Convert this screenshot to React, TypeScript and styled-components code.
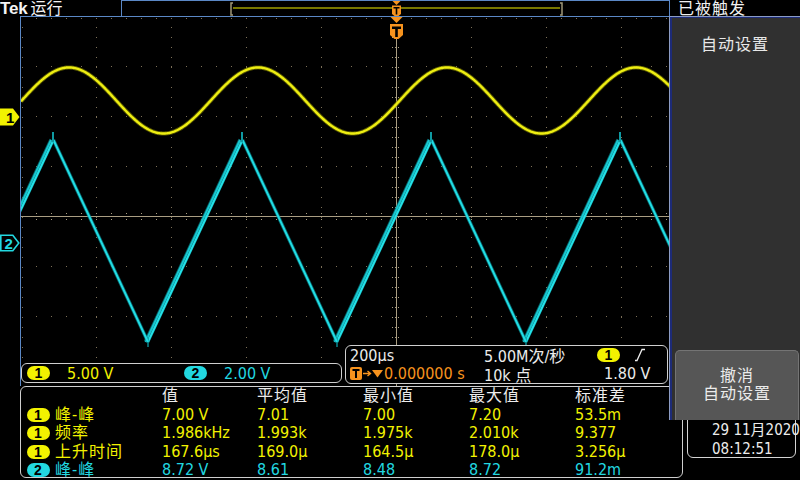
import React from 'react';
import styled, { createGlobalStyle } from 'styled-components';

const YELLOW = '#f2f200';
const CYAN = '#22d8e0';
const ORANGE = '#f7931e';
const FRAME = '#5b88c6';
const GRID = '#7d7058';
const AXIS = '#a99d82';

type Ch = 1 | 2;
const chColor = (c: Ch) => (c === 1 ? YELLOW : CYAN);

const GlobalStyle = createGlobalStyle`
  html, body {
    margin: 0;
    padding: 0;
    background: #000;
  }
  body {
    font-family: "Liberation Sans Narrow", "DejaVu Sans Condensed", "Liberation Sans", "Noto Sans CJK SC", sans-serif;
  }
`;

const Screen = styled.div`
  position: relative;
  width: 800px;
  height: 480px;
  overflow: hidden;
  background: #000;
  color: #e6e6e6;
  display: flex;
  flex-direction: column;
  font-size: 16px;
`;

/* ---------- top bar ---------- */

const TopBar = styled.div`
  display: flex;
  height: 16px;
  flex: none;
  padding-top: 1px;
  box-sizing: border-box;
`;

const Brand = styled.div`
  width: 121px;
  display: flex;
  align-items: center;
  gap: 3px;
  color: #f4f4f4;
  font-size: 16px;
  line-height: 15px;
  margin-top: -1px;
`;

const Logo = styled.span`
  font-family: "Liberation Sans", sans-serif;
  font-weight: bold;
  font-size: 17px;
  letter-spacing: -0.2px;
`;

const RecordBox = styled.div`
  width: 549px;
  height: 16px;
  margin-top: -1px;
  box-sizing: border-box;
  border: 1px solid ${FRAME};
  border-bottom: none;
`;

const TriggerState = styled.div`
  padding-left: 8px;
  font-size: 16px;
  line-height: 15px;
  letter-spacing: 1px;
  color: #f0f0f0;
  white-space: nowrap;
`;

/* ---------- waveform area ---------- */

const Body = styled.div`
  display: flex;
  height: 370px;
  flex: none;
`;

const MarkerColumn = styled.div`
  position: relative;
  width: 20px;
  flex: none;
`;

const ChMarker = styled.svg`
  position: absolute;
  left: 0;
`;

const PlotArea = styled.div`
  position: relative;
  flex: 1;
`;

const ReadoutRow = styled.div`
  position: absolute;
  left: 1px;
  bottom: 2px;
  display: flex;
  align-items: flex-end;
  gap: 3px;
`;

const ReadoutBox = styled.div`
  box-sizing: border-box;
  border: 1px solid #cfcfcf;
  border-radius: 6px;
  background: #000;
`;

const ScaleBox = styled(ReadoutBox)`
  width: 321px;
  height: 20px;
  margin-bottom: 1px;
  display: flex;
  align-items: center;
  padding-left: 5px;
`;

const ScaleItem = styled.div<{ $ch: Ch }>`
  width: 160px;
  display: flex;
  align-items: center;
  gap: 17px;
  color: ${p => chColor(p.$ch)};
`;

const TimeBox = styled(ReadoutBox)`
  width: 323px;
  height: 39px;
  padding: 0 0 0 4px;
  display: grid;
  grid-template-columns: 134px 113px 1fr;
  grid-auto-rows: 18.5px;
  align-content: center;
`;

const TimeCell = styled.div<{ $color?: string; $right?: boolean }>`
  display: flex;
  align-items: center;
  gap: 4px;
  white-space: nowrap;
  color: ${p => p.$color ?? '#ececec'};
  ${p => (p.$right ? 'padding-left: 7px;' : '')}
`;

const Pill = styled.span<{ $ch: Ch }>`
  display: inline-flex;
  align-items: center;
  justify-content: center;
  flex: none;
  width: 23px;
  height: 14px;
  border-radius: 7px;
  background: ${p => chColor(p.$ch)};
  color: #000;
  font-family: "Liberation Sans", sans-serif;
  font-weight: bold;
  font-size: 14px;
  line-height: 1;
`;

/* ---------- measurements ---------- */

const Bottom = styled.div`
  display: flex;
  flex: 1;
`;

const MeasTable = styled.div`
  margin-left: 20px;
  width: 663px;
  height: 92px;
  box-sizing: border-box;
  border: 1px solid #cfcfcf;
  border-radius: 6px;
  display: grid;
  grid-template-columns: 141px 95px 106px 106px 106px 1fr;
  grid-auto-rows: 18.5px;
  align-content: start;
  line-height: 18px;
`;

const Cell = styled.div<{ $color?: string }>`
  display: flex;
  align-items: center;
  white-space: nowrap;
  color: ${p => p.$color ?? '#ececec'};
`;

const LabelCell = styled(Cell)`
  padding-left: 6px;
  gap: 5px;
  letter-spacing: 1px;
`;

const HeadCell = styled(Cell)`
  letter-spacing: 1px;
`;

const DateBox = styled.div`
  margin: 24px 0 0 4px;
  width: 109px;
  height: 48px;
  box-sizing: border-box;
  border: 1px solid #d4d4d4;
  border-radius: 6px;
  padding: 10px 0 0 24px;
  font-size: 15px;
  line-height: 18.5px;
  color: #ececec;
  white-space: nowrap;
`;

/* ---------- side menu ---------- */

const SideMenu = styled.aside`
  position: absolute;
  top: 16px;
  right: 0;
  width: 131px;
  height: 404px;
  box-sizing: border-box;
  background: #303030;
  border-left: 1px solid #8c9cc4;
  border-top: 1px solid #8c9cc4;
  box-shadow: inset 2px 0 0 #1d2b78, inset 0 1px 0 #1d2b78;
  display: flex;
  flex-direction: column;
`;

const MenuTitle = styled.div`
  padding-top: 14px;
  text-align: center;
  font-size: 16px;
  letter-spacing: 1px;
  color: #e8e8e8;
`;

const MenuButton = styled.button`
  margin: auto 0 0 5px;
  width: 124px;
  height: 70px;
  box-sizing: border-box;
  background: #565656;
  border: 1px solid #747474;
  border-bottom: none;
  border-radius: 5px 5px 0 0;
  color: #ececec;
  font-family: inherit;
  font-size: 16px;
  letter-spacing: 1px;
  line-height: 18px;
  padding: 0 0 2px;
`;

/* ---------- drawing helpers ---------- */

const range = (a: number, b: number, step: number) => {
  const out: number[] = [];
  for (let v = a; v <= b + 0.001; v += step) out.push(v);
  return out;
};

const sinePath = () => {
  const pts = range(21, 771, 1).map(x => {
    const y = 100.5 - 33 * Math.cos((2 * Math.PI * (x - 447)) / 189);
    return `${x},${y.toFixed(2)}`;
  });
  return 'M' + pts.join(' L');
};

const PERIOD = 189;
const troughs = range(-41, 800, PERIOD);

const Graticule = () => {
  const vx = range(96.5, 696.5, 75).filter(x => x !== 396.5);
  const hy = range(66.5, 366.5, 50).filter(y => y !== 216.5);
  return (
    <g>
      {vx.map(x => (
        <line key={`v${x}`} x1={x} y1={27} x2={x} y2={417} stroke={GRID} strokeDasharray="1 9" />
      ))}
      {hy.map(y => (
        <line key={`h${y}`} x1={36} y1={y} x2={771} y2={y} stroke={GRID} strokeDasharray="1 14" />
      ))}
      <line x1={36} y1={18.5} x2={771} y2={18.5} stroke={GRID} strokeDasharray="1 14" />
      <line x1={22.5} y1={27} x2={22.5} y2={417} stroke={GRID} strokeDasharray="1 9" />
      <line x1={21} y1={216.5} x2={771} y2={216.5} stroke={AXIS} />
      <line x1={396.5} y1={39} x2={396.5} y2={417} stroke={AXIS} />
      {range(36, 771, 15).map(x => (
        <line key={`tx${x}`} x1={x + 0.5} y1={213} x2={x + 0.5} y2={221} stroke={AXIS} strokeDasharray="1 2" />
      ))}
      {range(27, 417, 10).map(y => (
        <line key={`ty${y}`} x1={392} y1={y + 0.5} x2={401} y2={y + 0.5} stroke={AXIS} strokeDasharray="1 2" />
      ))}
    </g>
  );
};

const Waves = () => {
  const sine = sinePath();
  const rising = troughs.map(t => `M${t},342 L${t + 94.5},140`).join(' ');
  const falling = troughs.map(t => `M${t + 94.5},140 L${t + PERIOD},342`).join(' ');
  return (
    <g clipPath="url(#grat)">
      <path d={sine} fill="none" stroke="#7a7a00" strokeWidth={4.2} opacity={0.7} />
      <path d={sine} fill="none" stroke="#eeee12" strokeWidth={2.4} />
      <path d={rising} fill="none" stroke="#0a8890" strokeWidth={5.5} transform="translate(-1.5,0)" opacity={0.7} />
      <path d={rising} fill="none" stroke="#17c6cf" strokeWidth={2} transform="translate(-2.5,0)" />
      <path d={rising} fill="none" stroke="#25e2e8" strokeWidth={2} />
      <path d={falling} fill="none" stroke="#0a8890" strokeWidth={3.6} opacity={0.7} />
      <path d={falling} fill="none" stroke="#22dde4" strokeWidth={2} />
      {troughs.map(t => (
        <g key={t}>
          <line x1={t + 94} y1={142} x2={t + 94} y2={132} stroke="#0f9aa2" strokeWidth={2} />
          <line x1={t} y1={342} x2={t} y2={347} stroke="#0a8890" strokeWidth={1.5} />
        </g>
      ))}
    </g>
  );
};

const TriggerMarker = () => (
  <g fill={ORANGE}>
    <path d="M390.5 17 H402.5 L396.5 23 Z" />
    <path d="M390 24 H403 V35 L398.5 39 H394.5 L390 35 Z" />
    <path d="M392 26.5 H401 V29 H397.8 V37 H395.2 V29 H392 Z" fill="#000" />
  </g>
);

const PlotSvg = () => (
  <svg width={780} height={370} style={{ display: 'block' }}>
    <defs>
      <clipPath id="grat">
        <rect x={21} y={17} width={750} height={400} />
      </clipPath>
    </defs>
    <g transform="translate(-20,-16)">
      <Graticule />
      <Waves />
      <line x1={20} y1={16.5} x2={800} y2={16.5} stroke={FRAME} />
      <line x1={20.5} y1={16} x2={20.5} y2={386} stroke={FRAME} />
      <TriggerMarker />
    </g>
  </svg>
);

const RecordStrip = () => (
  <svg width={547} height={15} style={{ display: 'block' }}>
    <g transform="translate(-122,0)">
      <path d="M233 2 H231 V14 H233" fill="none" stroke="#a09878" strokeWidth={1.5} />
      <path d="M560 2 H562 V14 H560" fill="none" stroke="#a09878" strokeWidth={1.5} />
      <line x1={233} y1={7} x2={560} y2={7} stroke={YELLOW} strokeWidth={1.2} />
      <g fill={ORANGE}>
        <path d="M392.5 0 H400.5 L396.5 4 Z" />
        <path d="M392 4.5 H401 V13 L398.5 15 H394.5 L392 13 Z" />
        <path d="M393.5 6 H399.5 V7.5 H397.3 V13.5 H395.7 V7.5 H393.5 Z" fill="#000" />
      </g>
    </g>
  </svg>
);

const Ch1Marker = ({ top }: { top: number }) => (
  <ChMarker width={20} height={18} style={{ top }}>
    <path d="M0 0.5 H13 L19.5 9 L13 17.5 H0 Z" fill={YELLOW} />
    <text x={6} y={14.5} fontSize={15} fontWeight="bold" fontFamily="Liberation Sans, sans-serif" fill="#000">
      1
    </text>
  </ChMarker>
);

const Ch2Marker = ({ top }: { top: number }) => (
  <ChMarker width={20} height={18} style={{ top }}>
    <path d="M0.8 1.2 H12.8 L18.8 9 L12.8 16.8 H0.8 Z" fill="none" stroke={CYAN} strokeWidth={1.6} />
    <text x={4.5} y={14.5} fontSize={15} fontWeight="bold" fontFamily="Liberation Sans, sans-serif" fill={CYAN}>
      2
    </text>
  </ChMarker>
);

const SlopeIcon = () => (
  <svg width={12} height={14}>
    <path d="M1 12.5 H3 L8 1.5 H11" fill="none" stroke="#ececec" strokeWidth={1.3} />
  </svg>
);

const TrigPosIcon = () => (
  <svg width={34} height={13}>
    <rect x={0} y={0} width={12} height={13} rx={2} fill={ORANGE} />
    <path d="M2.5 2 H9.5 V4 H7 V11 H5 V4 H2.5 Z" fill="#000" />
    <path d="M13 6.5 H20 M17.5 4 L20.5 6.5 L17.5 9" fill="none" stroke={ORANGE} strokeWidth={1.4} />
    <path d="M22 3 H33 L27.5 10.5 Z" fill={ORANGE} />
  </svg>
);

type Row = { ch: Ch; label: string; vals: string[] };

const rows: Row[] = [
  { ch: 1, label: '峰-峰', vals: ['7.00 V', '7.01', '7.00', '7.20', '53.5m'] },
  { ch: 1, label: '频率', vals: ['1.986kHz', '1.993k', '1.975k', '2.010k', '9.377'] },
  { ch: 1, label: '上升时间', vals: ['167.6µs', '169.0µ', '164.5µ', '178.0µ', '3.256µ'] },
  { ch: 2, label: '峰-峰', vals: ['8.72 V', '8.61', '8.48', '8.72', '91.2m'] },
];

const headers = ['值', '平均值', '最小值', '最大值', '标准差'];

export default function App() {
  return (
    <>
      <GlobalStyle />
      <Screen>
        <TopBar>
          <Brand>
            <Logo>Tek</Logo>
            <span>运行</span>
          </Brand>
          <RecordBox>
            <RecordStrip />
          </RecordBox>
          <TriggerState>已被触发</TriggerState>
        </TopBar>

        <Body>
          <MarkerColumn>
            <Ch1Marker top={92} />
            <Ch2Marker top={218} />
          </MarkerColumn>
          <PlotArea>
            <PlotSvg />
            <ReadoutRow>
              <ScaleBox>
                <ScaleItem $ch={1}>
                  <Pill $ch={1}>1</Pill>
                  5.00 V
                </ScaleItem>
                <ScaleItem $ch={2}>
                  <Pill $ch={2}>2</Pill>
                  2.00 V
                </ScaleItem>
              </ScaleBox>
              <TimeBox>
                <TimeCell>200µs</TimeCell>
                <TimeCell>5.00M次/秒</TimeCell>
                <TimeCell>
                  <Pill $ch={1}>1</Pill>
                  <span style={{ width: 6 }} />
                  <SlopeIcon />
                </TimeCell>
                <TimeCell $color={ORANGE}>
                  <TrigPosIcon />
                  <span style={{ marginLeft: -4 }}>0.000000 s</span>
                </TimeCell>
                <TimeCell>10k 点</TimeCell>
                <TimeCell $right>1.80 V</TimeCell>
              </TimeBox>
            </ReadoutRow>
          </PlotArea>
        </Body>

        <Bottom>
          <MeasTable>
            <Cell />
            {headers.map(h => (
              <HeadCell key={h}>{h}</HeadCell>
            ))}
            {rows.map((r, i) => (
              <React.Fragment key={i}>
                <LabelCell $color={chColor(r.ch)}>
                  <Pill $ch={r.ch}>{r.ch}</Pill>
                  {r.label}
                </LabelCell>
                {r.vals.map((v, j) => (
                  <Cell key={j} $color={chColor(r.ch)}>
                    {v}
                  </Cell>
                ))}
              </React.Fragment>
            ))}
          </MeasTable>
          <DateBox>
            <div>29 11月2020</div>
            <div>08:12:51</div>
          </DateBox>
        </Bottom>

        <SideMenu>
          <MenuTitle>自动设置</MenuTitle>
          <MenuButton>
            撤消
            <br />
            自动设置
          </MenuButton>
        </SideMenu>
      </Screen>
    </>
  );
}
